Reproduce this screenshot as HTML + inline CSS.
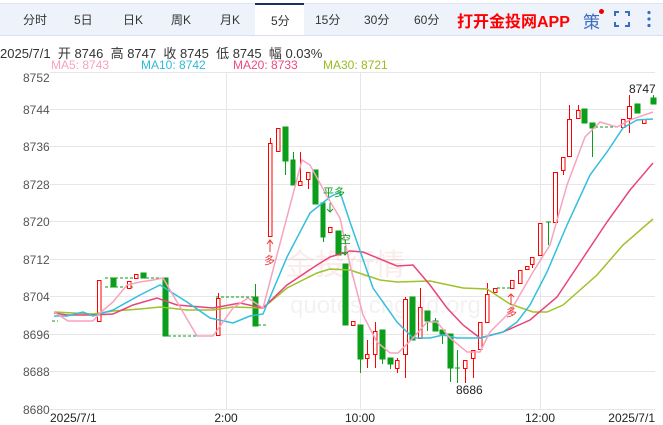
<!DOCTYPE html>
<html><head><meta charset="utf-8"><style>
body{margin:0;width:663px;height:425px;overflow:hidden;background:#fff;font-family:"Liberation Sans","Noto Sans CJK SC",sans-serif;position:relative}
.bar{position:absolute;left:0;top:3px;width:663px;height:31px;background:#eef3fb;border-top:1px solid #dde5f0;border-bottom:1px solid #d6e0ee}
.t{position:absolute;top:11px;font-size:12px;color:#333}
.sel{position:absolute;left:255px;top:3px;width:49px;height:32px;background:#fff;border-top:2px solid #1c2f6e;box-sizing:border-box}
.a{position:absolute;font-size:12px}
</style></head><body>
<div class="bar"></div>
<div class="sel"></div>
<div class="t" style="left:23px">分时</div>
<div class="t" style="left:74px">5日</div>
<div class="t" style="left:123px">日K</div>
<div class="t" style="left:171px">周K</div>
<div class="t" style="left:220px">月K</div>
<div class="t" style="left:271px;top:12px">5分</div>
<div class="t" style="left:315px">15分</div>
<div class="t" style="left:364px">30分</div>
<div class="t" style="left:414px">60分</div>
<div class="t" style="left:457px;top:8px;color:#f00;font-weight:bold;font-size:16px">打开金投网APP</div>
<div class="t" style="left:583px;top:8px;color:#3a6cc0;font-size:17px">策</div>
<div style="position:absolute;left:599px;top:9px;width:5px;height:5px;border-radius:50%;background:#e00"></div>
<svg style="position:absolute;left:614px;top:11px" width="16" height="16"><path d="M1 5V1H5M11 1H15V5M15 11V15H11M5 15H1V11" fill="none" stroke="#3a6cc0" stroke-width="2"/></svg>
<svg style="position:absolute;left:646px;top:10px" width="6" height="18"><circle cx="3" cy="2.5" r="1.6" fill="#3a6cc0"/><circle cx="3" cy="9" r="1.6" fill="#3a6cc0"/><circle cx="3" cy="15.5" r="1.6" fill="#3a6cc0"/></svg>
<div class="a" style="left:0;top:43px;font-size:13px;color:#333">2025/7/1 &nbsp;开 8746 &nbsp;高 8747 &nbsp;收 8745 &nbsp;低 8745 &nbsp;幅 0.03%</div>
<div class="a" style="left:51px;top:58px;color:#f7a3bd">MA5: 8743</div>
<div class="a" style="left:141px;top:58px;color:#2bbbd8">MA10: 8742</div>
<div class="a" style="left:233px;top:58px;color:#ec4a80">MA20: 8733</div>
<div class="a" style="left:323px;top:58px;color:#98bc20">MA30: 8721</div>
<svg style="position:absolute;left:0;top:0" width="663" height="425" font-family="Liberation Sans,sans-serif">
<g stroke="#e6e6e6" stroke-width="1">
<line x1="50" y1="72.5" x2="655" y2="72.5"/>
<line x1="50" y1="109.5" x2="655" y2="109.5"/><line x1="50" y1="146.5" x2="655" y2="146.5"/><line x1="50" y1="184.5" x2="655" y2="184.5"/><line x1="50" y1="221.5" x2="655" y2="221.5"/><line x1="50" y1="259.5" x2="655" y2="259.5"/><line x1="50" y1="296.5" x2="655" y2="296.5"/><line x1="50" y1="334.5" x2="655" y2="334.5"/><line x1="50" y1="371.5" x2="655" y2="371.5"/><line x1="50" y1="409.5" x2="655" y2="409.5"/>
<line x1="226.5" y1="72" x2="226.5" y2="410"/><line x1="360.5" y1="72" x2="360.5" y2="410"/><line x1="540.5" y1="72" x2="540.5" y2="410"/>
</g>
<g font-size="12" fill="#555">
<text x="23" y="82">8752</text><text x="23" y="114">8744</text><text x="23" y="151">8736</text><text x="23" y="189">8728</text><text x="23" y="226">8720</text><text x="23" y="264">8712</text><text x="23" y="301">8704</text><text x="23" y="339">8696</text><text x="23" y="376">8688</text><text x="23" y="414">8680</text>
</g>
<g font-size="12" fill="#222">
<text x="50" y="422">2025/7/1</text><text x="226" y="422" text-anchor="middle">2:00</text><text x="360" y="422" text-anchor="middle">10:00</text><text x="540" y="422" text-anchor="middle">12:00</text><text x="655" y="422" text-anchor="end">2025/7/1</text>
<text x="456" y="394">8686</text><text x="629" y="93">8747</text>
</g>
<text x="285" y="275" font-size="30" fill="rgba(230,150,140,0.18)">金投行情</text>
<text x="290" y="313" font-size="24" fill="rgba(150,150,150,0.12)">quotes.cngold.org</text>
<g stroke="#0a9e1a" stroke-dasharray="3,2" fill="none">
<line x1="52" y1="321" x2="58" y2="321"/><line x1="105" y1="278" x2="133" y2="278"/><line x1="105" y1="287" x2="133" y2="287"/><line x1="146" y1="278" x2="163" y2="278"/><line x1="163" y1="336" x2="213" y2="336"/><line x1="216" y1="297" x2="253" y2="297"/><line x1="253" y1="325" x2="266" y2="325"/><line x1="497" y1="288" x2="510" y2="288"/><line x1="595" y1="127" x2="620" y2="127"/>
</g>
<g fill="#0a9e1a" stroke="#0a9e1a">
<rect x="111" y="278" width="5" height="9"/><rect x="141" y="273" width="5" height="5"/><rect x="163" y="278" width="5" height="58"/>
<line x1="255.5" y1="284" x2="255.5" y2="297"/><rect x="253" y="297" width="5" height="29"/>
<line x1="285.5" y1="127" x2="285.5" y2="175"/><rect x="283" y="127" width="5" height="34"/>
<line x1="293.5" y1="152" x2="293.5" y2="185"/><rect x="291" y="160" width="4" height="25"/>
<rect x="313" y="170" width="5" height="34"/>
<line x1="323.5" y1="203" x2="323.5" y2="242"/><rect x="321" y="203" width="4" height="34"/>
<rect x="336" y="231" width="5" height="24"/><rect x="343" y="264" width="5" height="61"/>
<line x1="360.5" y1="325" x2="360.5" y2="373"/><rect x="358" y="325" width="5" height="34"/>
<line x1="382.5" y1="330" x2="382.5" y2="364"/><rect x="380" y="330" width="5" height="29"/>
<line x1="390.5" y1="358" x2="390.5" y2="369"/><rect x="388" y="358" width="5" height="6"/>
<rect x="410" y="297" width="5" height="43"/>
<line x1="427.5" y1="311" x2="427.5" y2="331"/><rect x="425" y="311" width="5" height="10"/>
<line x1="435.5" y1="318" x2="435.5" y2="331"/><rect x="433" y="321" width="5" height="10"/>
<line x1="442.5" y1="330" x2="442.5" y2="344"/><rect x="440" y="330" width="5" height="4"/>
<line x1="450.5" y1="334" x2="450.5" y2="382"/><rect x="448" y="334" width="5" height="34"/>
<line x1="457.5" y1="350" x2="457.5" y2="383"/><line x1="455" y1="368" x2="460" y2="368"/>
<line x1="548.5" y1="222" x2="548.5" y2="245"/><line x1="546" y1="222" x2="551" y2="222"/>
<rect x="582" y="109" width="5" height="14"/>
<line x1="592.5" y1="123" x2="592.5" y2="157"/><rect x="590" y="123" width="5" height="5"/>
<rect x="635" y="104" width="5" height="9"/>
<line x1="653.5" y1="95" x2="653.5" y2="104"/><rect x="651" y="98" width="5" height="6"/>
</g>
<g stroke="#f00" fill="#fff" stroke-width="1">
<rect x="97.5" y="280.5" width="3.5" height="41"/><rect x="127.5" y="281.5" width="3.5" height="7"/><rect x="134.5" y="274.5" width="3.5" height="4"/>
<line x1="218.5" y1="293" x2="218.5" y2="298"/><rect x="216.5" y="298.5" width="3.5" height="37"/>
<line x1="270.5" y1="138" x2="270.5" y2="143"/><rect x="268.5" y="143.5" width="3.5" height="93"/>
<rect x="276.5" y="128.5" width="3.5" height="23"/>
<line x1="300.5" y1="152" x2="300.5" y2="181"/><rect x="298.5" y="181.5" width="3.5" height="4"/>
<line x1="308.5" y1="172" x2="308.5" y2="189"/><rect x="306.5" y="172.5" width="3.5" height="7"/>
<rect x="328.5" y="227.5" width="3.5" height="5"/>
<rect x="351.5" y="321.5" width="3.5" height="4"/>
<line x1="367.5" y1="340" x2="367.5" y2="368"/><rect x="365.5" y="354.5" width="3.5" height="4"/>
<line x1="375.5" y1="322" x2="375.5" y2="368"/><rect x="373.5" y="331.5" width="3.5" height="23"/>
<line x1="397.5" y1="358" x2="397.5" y2="373"/><rect x="395.5" y="360.5" width="3.5" height="8"/>
<line x1="405.5" y1="297" x2="405.5" y2="378"/><rect x="403.5" y="299.5" width="4" height="55"/>
<line x1="420.5" y1="288" x2="420.5" y2="338"/><rect x="418.5" y="307.5" width="3.5" height="31"/>
<line x1="465.5" y1="360" x2="465.5" y2="383"/><rect x="463.5" y="360.5" width="3.5" height="8"/>
<line x1="473.5" y1="350" x2="473.5" y2="378"/><rect x="471.5" y="350.5" width="3.5" height="8"/>
<rect x="478.5" y="322.5" width="3.5" height="27"/>
<line x1="487.5" y1="283" x2="487.5" y2="322"/><rect x="485.5" y="294.5" width="3.5" height="28"/>
<rect x="493.5" y="288.5" width="3.5" height="4"/>
<rect x="510.5" y="280.5" width="3.5" height="8"/><rect x="518.5" y="270.5" width="3.5" height="13"/><rect x="525.5" y="266.5" width="3.5" height="3"/>
<line x1="532.5" y1="257" x2="532.5" y2="268"/><rect x="530.5" y="257.5" width="3.5" height="7"/>
<rect x="538.5" y="223.5" width="3.5" height="32"/><rect x="553.5" y="172.5" width="4" height="50"/>
<line x1="563.5" y1="157" x2="563.5" y2="175"/><rect x="561.5" y="157.5" width="3.5" height="13"/>
<line x1="569.5" y1="105" x2="569.5" y2="119"/><rect x="567.5" y="119.5" width="4" height="37"/>
<line x1="578.5" y1="105" x2="578.5" y2="110"/><rect x="576.5" y="110.5" width="3.5" height="8"/>
<rect x="621.5" y="119.5" width="3.5" height="8"/>
<line x1="629.5" y1="95" x2="629.5" y2="133"/><rect x="627.5" y="106.5" width="4" height="12"/>
<rect x="642.5" y="119.5" width="3.5" height="4"/>
</g>
<g fill="none" stroke-width="1.5">
<polyline stroke="#9fc12a" points="54,312 93,314 113,311 140,309 160,307 187,310 213,310 233,307 263,308 287,288 317,273 330,269 350,270 380,280 397,282 430,281 463,288 487,289 510,304 533,312 547,312 563,305 597,275 623,245 653,219"/>
<polyline stroke="#e8447a" points="54,313 67,315 93,315 113,314 133,305 157,298 177,305 213,308 240,303 263,308 287,285 317,265 330,257 350,251 363,252 397,266 413,265 430,285 447,308 463,325 480,338 503,332 530,320 557,297 583,258 607,222 630,190 653,163"/>
<polyline stroke="#33bfdc" points="54,316 67,316 83,312 93,316 113,310 140,295 160,285 187,302 210,318 233,323 250,316 263,314 287,257 310,213 330,197 340,192 350,222 373,288 397,322 413,338 430,338 443,335 457,338 480,338 503,332 517,322 530,305 547,272 567,225 590,175 607,152 623,128 637,120 653,119"/>
<polyline stroke="#f7a3bd" points="54,312 68,321 93,321 100,313 113,302 127,285 140,282 153,280 163,278 197,336 213,336 233,308 248,298 263,308 302,160 310,165 328,198 340,218 350,265 363,315 377,342 390,353 398,353 413,338 427,322 437,322 450,338 467,352 480,352 490,332 510,312 533,272 550,245 567,185 585,137 600,122 617,127 630,120 653,112"/>
</g>
<g font-size="11">
<text x="264" y="264" fill="#e33">多</text><path d="M270 252V240M267 244L270 240L273 244" stroke="#e33" fill="none"/>
<text x="323" y="196" fill="#0a9e1a">平多</text><path d="M330 203V212M327 209L330 212L333 209" stroke="#0a9e1a" fill="none"/>
<text x="340" y="243" fill="#0a9e1a">空</text><path d="M345 246V255M342 252L345 255L348 252" stroke="#0a9e1a" fill="none"/>
<text x="506" y="316" fill="#e33">多</text><path d="M511 305V294M508 297L511 294L514 297" stroke="#e33" fill="none"/>
</g>
</svg>
</body></html>
